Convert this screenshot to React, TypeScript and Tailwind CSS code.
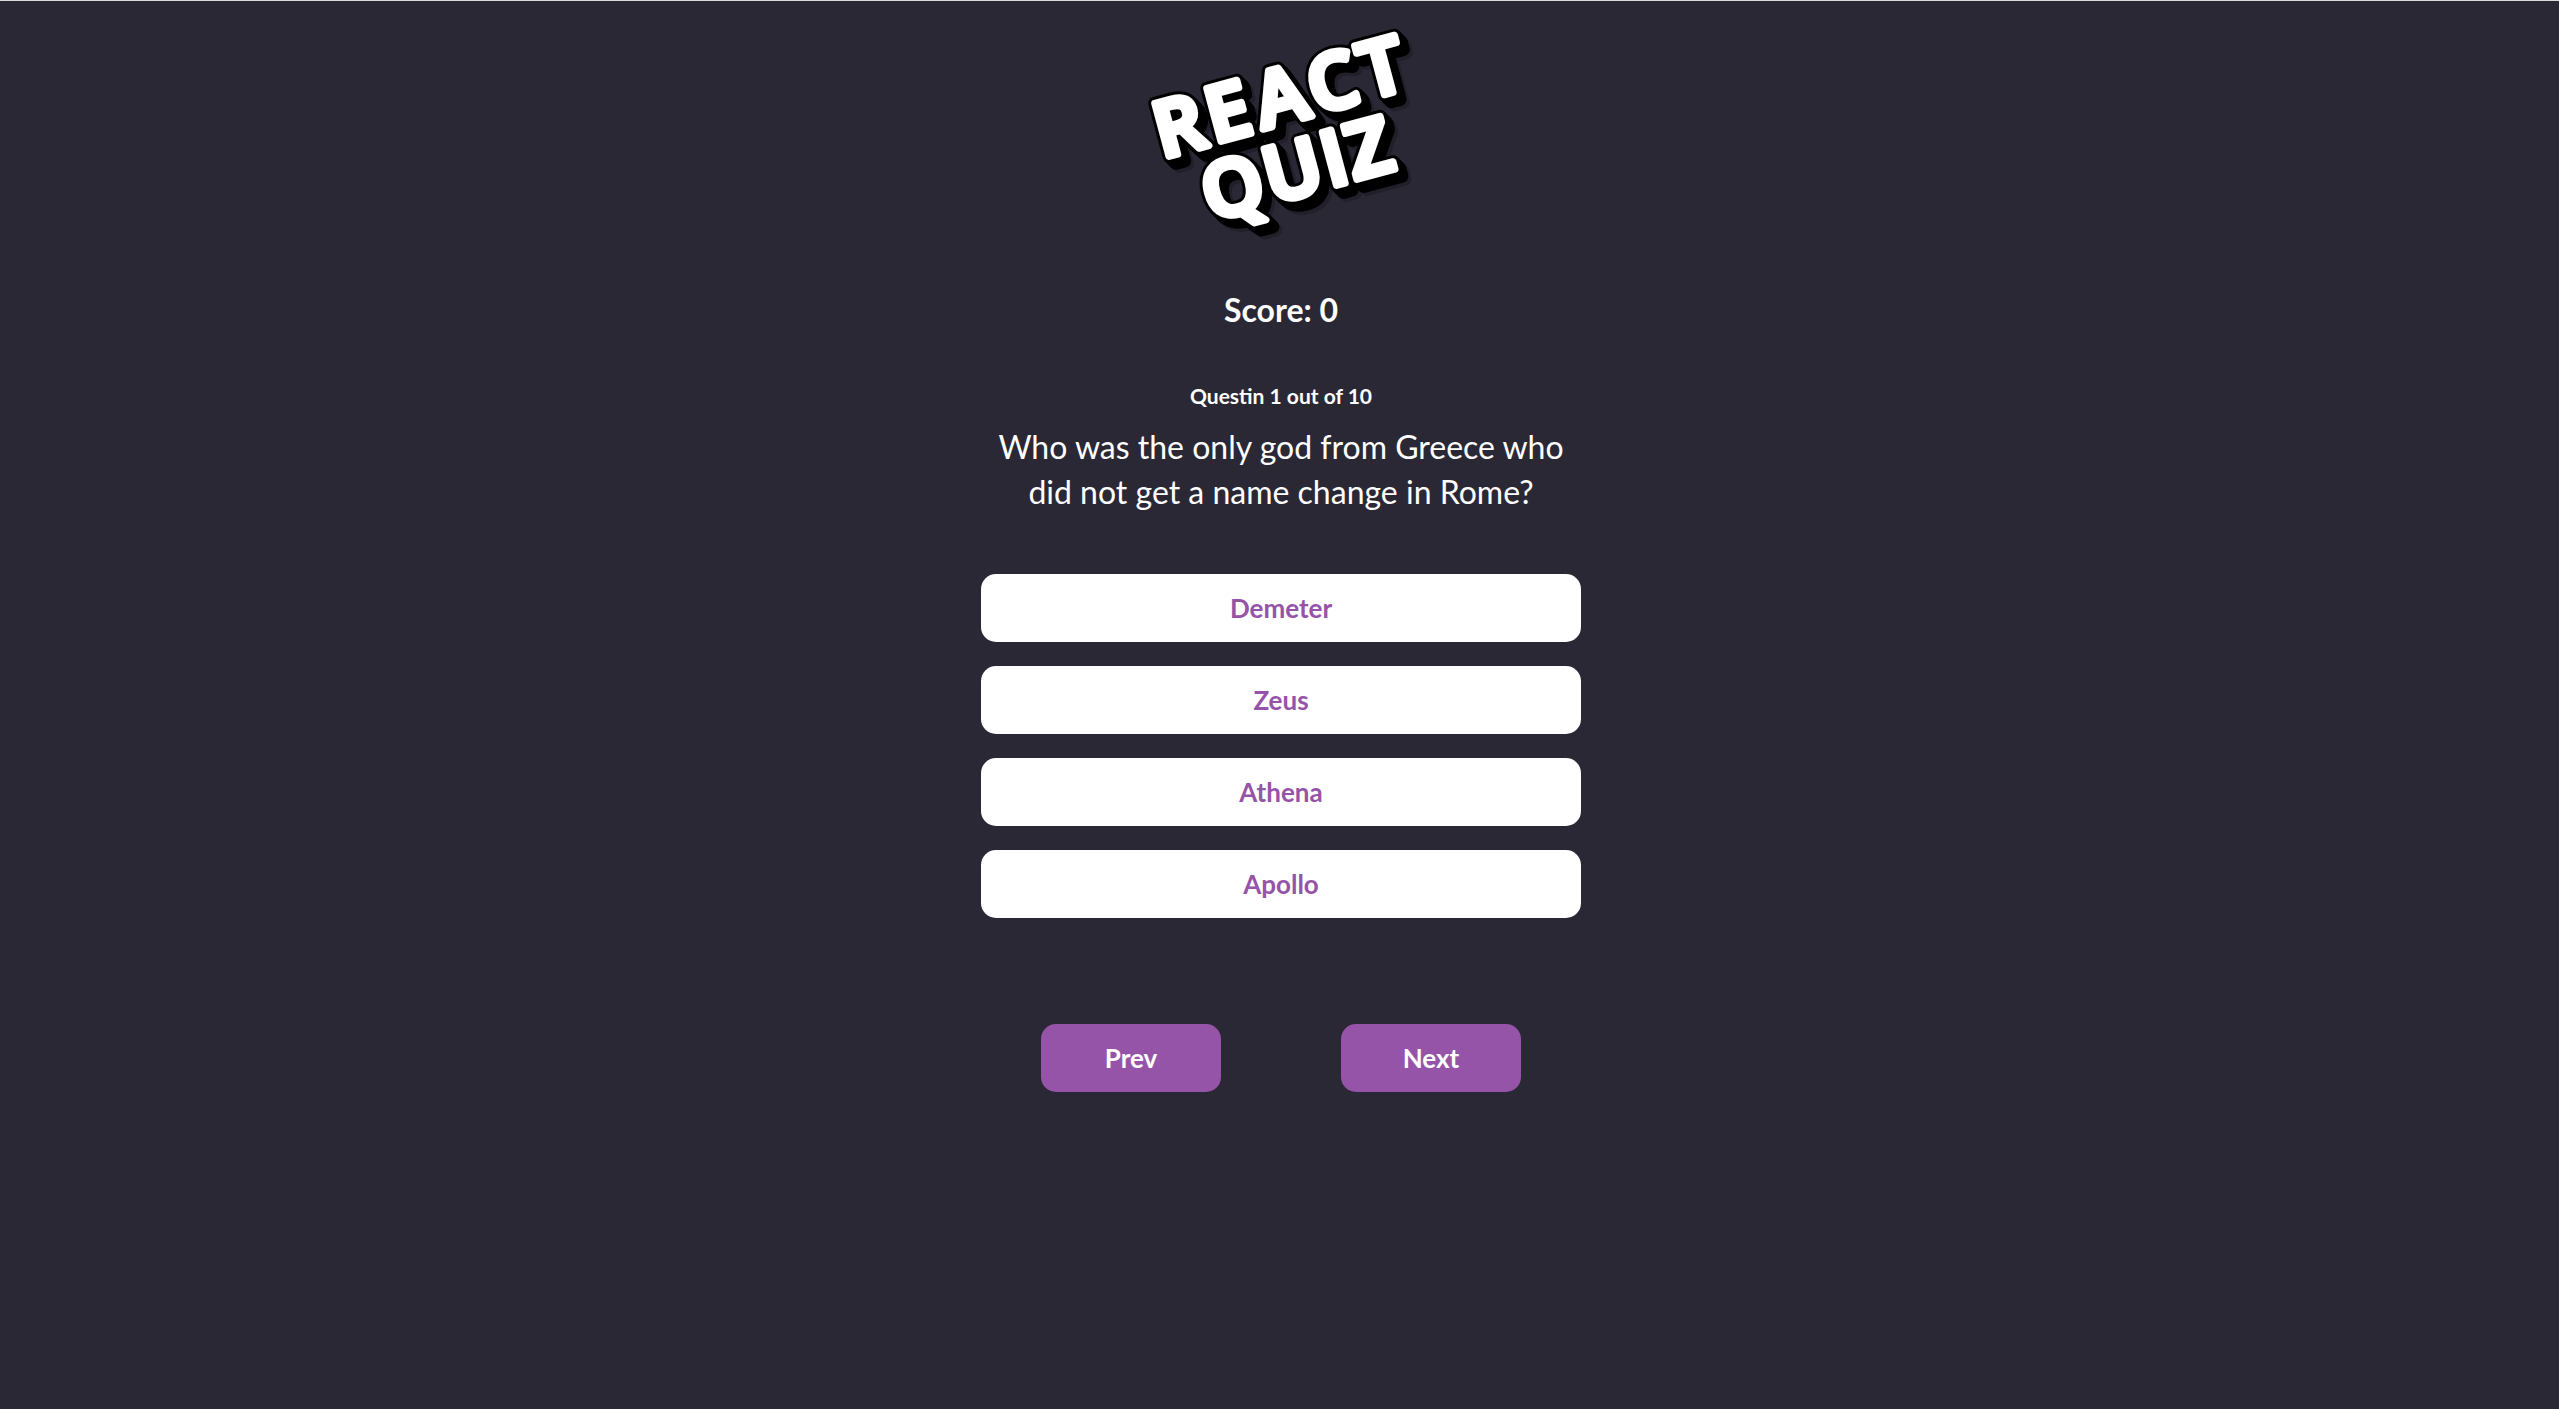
const options = ["Demeter", "Zeus", "Athena", "Apollo"];

function LogoText({ className }: { className: string }) {
  return (
    <g className={className} transform="rotate(-16)" strokeLinejoin="round" fontSize="77" fontWeight="600">
      <text x="-11 43 94 149 203" y="151" rotate="1">REACT</text>
      <text x="18 82 142 168" y="225" rotate="1">QUIZ</text>
    </g>
  );
}

const depth = [0, 1, 2, 3, 4, 5, 6, 7];

function Logo() {
  return (
    <svg viewBox="0 0 300 240" className="h-60 w-[300px] overflow-visible font-['Open_Sans',sans-serif]" role="img" aria-label="React Quiz">
      <g transform="translate(10 10)">
        <LogoText className="fill-[#221f2b] stroke-[#221f2b] stroke-[13px]" />
      </g>
      {depth.map((d) => (
        <g key={d} transform={`translate(${d} ${d})`}>
          <LogoText className="fill-black stroke-black stroke-[13px]" />
        </g>
      ))}
      <LogoText className="fill-white stroke-white stroke-[7px]" />
    </svg>
  );
}

export default function App() {
  return (
    <div className="flex min-h-screen flex-col items-center border-t border-[#d9dbd9] bg-[#2b2836] pt-[9px] pl-[3px] text-center font-[Lato,sans-serif] text-white">
      <header>
        <h1><Logo /></h1>
      </header>
      <main className="flex w-full max-w-[600px] flex-col items-center">
        <p className="mt-[37px] text-[32px] leading-[45px] font-bold">Score: 0</p>
        <p className="mt-12 text-[21px] leading-8 font-bold">Questin 1 out of 10</p>
        <h2 className="mt-3 px-4 text-[32px] leading-[45px]">Who was the only god from Greece who did not get a name change in Rome?</h2>
        <div className="mt-[60px] flex w-full flex-col gap-6">
          {options.map((option) => (
            <button key={option} type="button" className="h-[68px] rounded-[15px] bg-white text-[26px] font-bold text-[#9654a8]">
              {option}
            </button>
          ))}
        </div>
        <nav className="mt-[106px] flex w-full justify-between px-[60px]">
          <button type="button" className="h-[68px] w-[180px] rounded-[15px] bg-[#9654a8] text-[26px] font-bold">Prev</button>
          <button type="button" className="h-[68px] w-[180px] rounded-[15px] bg-[#9654a8] text-[26px] font-bold">Next</button>
        </nav>
      </main>
    </div>
  );
}
